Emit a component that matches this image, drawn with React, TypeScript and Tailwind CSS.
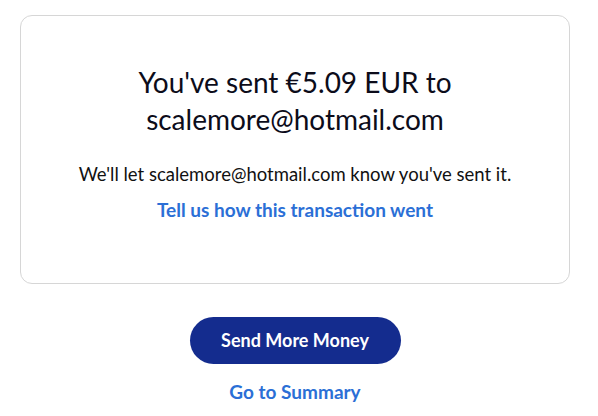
export default function App() {
  return (
    <div className="min-h-[416px] bg-white pl-5 pt-[15px] font-['Lato',sans-serif] text-[#1a1a1a]">
      <div className="flex h-[269px] w-[550px] flex-col items-center rounded-xl border border-[#d6d6d6] pt-[48px] text-center">
        <h1 className="text-[28px] leading-[37px] font-normal text-[#0c0c1a]">
          You've sent €5.09 EUR to
          <br />
          scalemore@hotmail.com
        </h1>
        <p className="mt-[24px] text-[18.5px] leading-6 text-[#111]">
          We'll let scalemore@hotmail.com know you've sent it.
        </p>
        <a href="#" className="mt-3 text-[19px] leading-6 font-bold text-[#2b6fd6]">
          Tell us how this transaction went
        </a>
      </div>
      <div className="mt-[33px] flex w-[550px] flex-col items-center">
        <button className="h-[47px] w-[211px] rounded-full bg-[#142c8e] text-[18px] font-bold text-white">
          Send More Money
        </button>
        <a href="#" className="mt-4 text-[19px] leading-6 font-bold text-[#2b6fd6]">
          Go to Summary
        </a>
      </div>
    </div>
  );
}
